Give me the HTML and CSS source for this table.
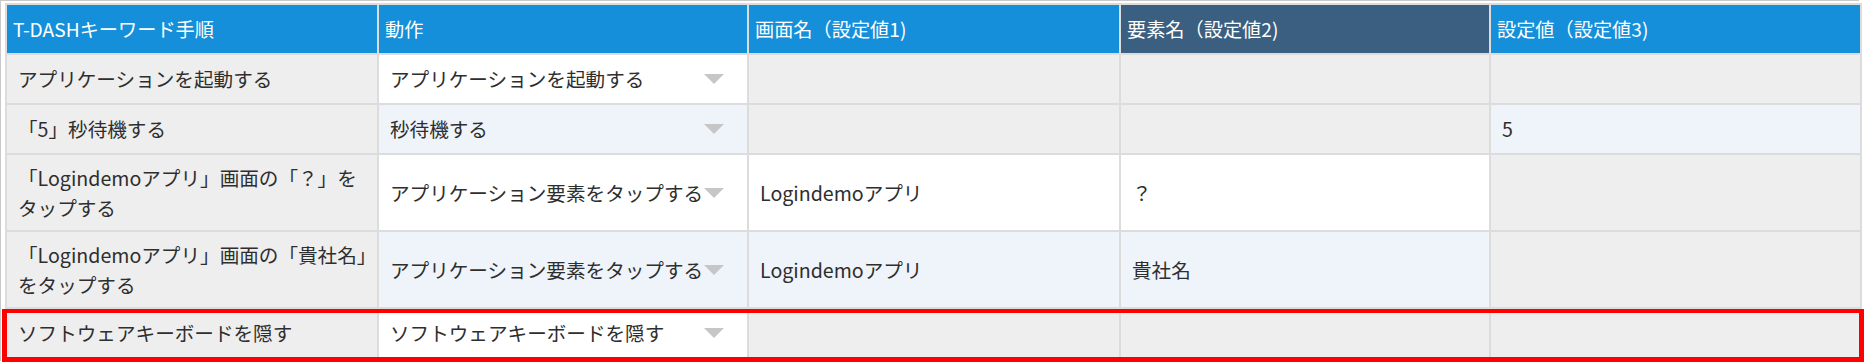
FILE: index.html
```html
<!DOCTYPE html>
<html lang="ja">
<head>
<meta charset="utf-8">
<title>T-DASH</title>
<link rel="stylesheet" href="styles.css">
</head>
<body>
<div class="frame">
  <table class="grid">
    <colgroup>
      <col class="c1"><col class="c2"><col class="c3"><col class="c4"><col class="c5">
    </colgroup>
    <thead>
      <tr>
        <th>T-DASHキーワード手順</th>
        <th>動作</th>
        <th>画面名（設定値1)</th>
        <th class="th-dark">要素名（設定値2)</th>
        <th>設定値（設定値3)</th>
      </tr>
    </thead>
    <tbody>
      <tr class="r-short">
        <td class="ro">アプリケーションを起動する</td>
        <td class="ed odd"><div class="sel"><span class="sel-text">アプリケーションを起動する</span><span class="arrow"></span></div></td>
        <td class="ro"></td>
        <td class="ro"></td>
        <td class="ro"></td>
      </tr>
      <tr class="r-short">
        <td class="ro">「5」秒待機する</td>
        <td class="ed even"><div class="sel"><span class="sel-text">秒待機する</span><span class="arrow"></span></div></td>
        <td class="ro"></td>
        <td class="ro"></td>
        <td class="ed even">5</td>
      </tr>
      <tr class="r-tall">
        <td class="ro">「Logindemoアプリ」画面の「？」を<br>タップする</td>
        <td class="ed odd"><div class="sel"><span class="sel-text">アプリケーション要素をタップする</span><span class="arrow"></span></div></td>
        <td class="ed odd">Logindemoアプリ</td>
        <td class="ed odd">？</td>
        <td class="ro"></td>
      </tr>
      <tr class="r-tall">
        <td class="ro">「Logindemoアプリ」画面の「貴社名」<br>をタップする</td>
        <td class="ed even"><div class="sel"><span class="sel-text">アプリケーション要素をタップする</span><span class="arrow"></span></div></td>
        <td class="ed even">Logindemoアプリ</td>
        <td class="ed even">貴社名</td>
        <td class="ro"></td>
      </tr>
      <tr class="r-short">
        <td class="ro">ソフトウェアキーボードを隠す</td>
        <td class="ed odd"><div class="sel"><span class="sel-text">ソフトウェアキーボードを隠す</span><span class="arrow"></span></div></td>
        <td class="ro"></td>
        <td class="ro"></td>
        <td class="ro"></td>
      </tr>
    </tbody>
  </table>
  <div class="highlight"></div>
</div>
</body>
</html>
```

FILE: styles.css
```css
html, body {
  margin: 0;
  padding: 0;
  background: #ffffff;
}

body {
  font-family: "Noto Sans CJK JP", "Noto Sans", sans-serif;
  font-size: 19.6px;
  color: #2e2e2e;
  overflow: hidden;
}

.frame {
  border-top: 1px solid #c9c9c9;
  border-left: 1px solid #c9c9c9;
  padding: 2px 0 0 4px;
  width: 1859px;
  height: 361px;
  box-sizing: border-box;
}

.grid {
  table-layout: fixed;
  width: 1857px;
  border-collapse: separate;
  border-spacing: 2px;
  background: #dcdcdc;
}

.c1 { width: 370px; }
.c2 { width: 368px; }
.c3 { width: 370px; }
.c4 { width: 368px; }
.c5 { width: 369px; }

th {
  height: 48px;
  padding: 0 0 0 6px;
  background: #158fd9;
  color: #ffffff;
  font-size: 19.2px;
  font-weight: normal;
  text-align: left;
  vertical-align: middle;
  white-space: nowrap;
  line-height: 1.3;
}

th.th-dark {
  background: #3b5f80;
}

td {
  padding: 0 4px 0 11px;
  vertical-align: middle;
  line-height: 29.5px;
  white-space: nowrap;
}

.r-short td { height: 48px; }
.r-tall td { height: 75px; }

td.ro { background: #eeeeee; }
td.ed.odd { background: #ffffff; }
td.ed.even { background: #eff4fa; }

.sel {
  display: flex;
  align-items: center;
  padding-right: 19px;
  gap: 4px;
}

.sel-text {
  flex: 1 1 auto;
  min-width: 0;
}

.arrow {
  flex: 0 0 auto;
  width: 0;
  height: 0;
  border-left: 10px solid transparent;
  border-right: 10px solid transparent;
  border-top: 10px solid #c6c6c6;
}

.highlight {
  position: absolute;
  left: 2px;
  top: 309px;
  width: 1862px;
  height: 53px;
  box-sizing: border-box;
  border: 5px solid #ff0000;
  border-top-width: 4px;
  pointer-events: none;
}
```
